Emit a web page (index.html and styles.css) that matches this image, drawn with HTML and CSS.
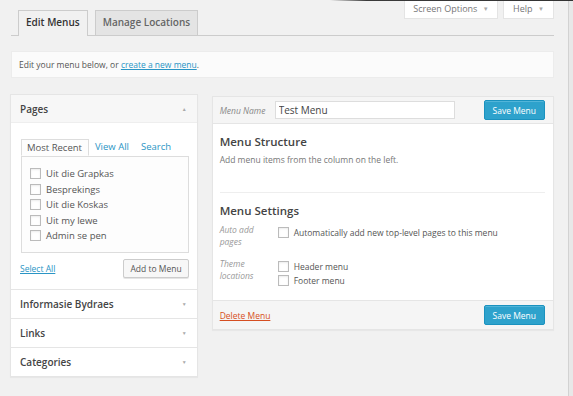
FILE: index.html
```html
<!DOCTYPE html>
<html lang="en">
<head>
  <meta charset="UTF-8">
  <title>Menus</title>
  <link rel="stylesheet" href="styles.css">
</head>
<body>
  <div class="page">
    <div class="wrap">
      <div class="screen-meta-links">
        <a href="#" class="meta-button options">Screen Options <span class="caret">▼</span></a>
        <a href="#" class="meta-button help">Help <span class="caret">▼</span></a>
      </div>

      <div class="nav-tabs">
        <a href="#" class="nav-tab active">Edit Menus</a>
        <a href="#" class="nav-tab">Manage Locations</a>
      </div>

      <div class="notice">
        Edit your menu below, or <a href="#">create a new menu</a>.
      </div>

      <div class="columns">
        <!-- Left: items to add -->
        <div class="side">
          <div class="side-section">
            <div class="side-title">Pages <span class="arrow">▲</span></div>
            <div class="side-body">
              <ul class="tabs">
                <li class="tab current">Most Recent</li>
                <li class="tab">View All</li>
                <li class="tab">Search</li>
              </ul>
              <div class="tab-panel">
                <label class="check"><span class="box"></span>Uit die Grapkas</label>
                <label class="check"><span class="box"></span>Besprekings</label>
                <label class="check"><span class="box"></span>Uit die Koskas</label>
                <label class="check"><span class="box"></span>Uit my lewe</label>
                <label class="check"><span class="box"></span>Admin se pen</label>
              </div>
              <div class="side-actions">
                <a href="#" class="select-all">Select All</a>
                <button class="button">Add to Menu</button>
              </div>
            </div>
          </div>
          <div class="side-section closed">
            <div class="side-title">Informasie Bydraes <span class="arrow">▼</span></div>
          </div>
          <div class="side-section closed">
            <div class="side-title">Links <span class="arrow">▼</span></div>
          </div>
          <div class="side-section closed">
            <div class="side-title">Categories <span class="arrow">▼</span></div>
          </div>
        </div>

        <!-- Right: menu edit -->
        <div class="menu-edit">
          <div class="menu-header">
            <span class="field-label">Menu Name</span>
            <input class="menu-name" type="text" value="Test Menu">
            <button class="button-primary">Save Menu</button>
          </div>
          <div class="menu-body">
            <h3>Menu Structure</h3>
            <p class="hint">Add menu items from the column on the left.</p>
            <div class="divider"></div>
            <h3>Menu Settings</h3>
            <div class="setting">
              <span class="setting-label">Auto add pages</span>
              <div class="setting-input">
                <label class="check"><span class="box"></span>Automatically add new top-level pages to this menu</label>
              </div>
            </div>
            <div class="setting">
              <span class="setting-label">Theme locations</span>
              <div class="setting-input">
                <label class="check"><span class="box"></span>Header menu</label>
                <label class="check"><span class="box"></span>Footer menu</label>
              </div>
            </div>
          </div>
          <div class="menu-footer">
            <a href="#" class="delete">Delete Menu</a>
            <button class="button-primary">Save Menu</button>
          </div>
        </div>
      </div>
    </div>
    <div class="scrollbar"></div>
  </div>
</body>
</html>
```

FILE: styles.css
```css
* {
  margin: 0;
  padding: 0;
  box-sizing: border-box;
}

body {
  background-color: #f1f1f1;
  color: #444;
  font-family: 'Open Sans', 'Noto Sans', sans-serif;
  font-size: 9px;
}

a {
  color: #2a95c5;
}

.page {
  position: relative;
  display: flex;
  height: 396px;
  overflow: hidden;
}

/* edge of the admin bar above the screenshot */
.page::before {
  content: '';
  position: absolute;
  top: 0;
  left: 330px;
  right: 0;
  height: 1px;
  background: linear-gradient(to right, rgba(60, 60, 60, 0), #3a3a3a 15%, #333);
}

.wrap {
  width: 568px;
  padding: 0 14px 0 11px;
}

.scrollbar {
  flex: 1;
  background-color: #e8e8e8;
  border-left: 1px solid #d2d2d2;
}

/* Screen options / help */
.screen-meta-links {
  display: flex;
  justify-content: flex-end;
  gap: 5px;
  height: 19px;
}

.meta-button {
  display: block;
  height: 19px;
  line-height: 18px;
  text-align: center;
  background-color: #fff;
  border: 1px solid #e4e4e4;
  border-top: none;
  color: #777;
  font-size: 9px;
  text-decoration: none;
}

.meta-button.options {
  width: 94px;
}

.meta-button.help {
  width: 51px;
}

.meta-button .caret {
  font-size: 6px;
  color: #aaa;
  margin-left: 3px;
  vertical-align: 1px;
}

/* Tabs */
.nav-tabs {
  display: flex;
  gap: 7px;
  margin-top: -9px;
  padding-left: 7px;
  border-bottom: 1px solid #ccc;
}

.nav-tab {
  display: block;
  height: 25px;
  line-height: 23px;
  padding: 0 7px;
  border: 1px solid #ccc;
  border-bottom: none;
  background-color: #e4e4e4;
  color: #666;
  font-size: 10px;
  font-weight: 600;
  text-decoration: none;
  margin-bottom: -1px;
}

.nav-tab.active {
  background-color: #f1f1f1;
  color: #333;
  height: 26px;
}

/* Notice */
.notice {
  margin-top: 15px;
  height: 27px;
  line-height: 26px;
  padding: 0 7px;
  background-color: #fbfbfb;
  border: 1px solid #ececec;
  color: #555;
  font-size: 8.5px;
}

/* Columns */
.columns {
  display: flex;
  gap: 14px;
  align-items: flex-start;
  margin-top: 16px;
  margin-left: -1px;
}

.side {
  width: 188px;
  background-color: #fff;
  border: 1px solid #e5e5e5;
  box-shadow: 0 1px 1px rgba(0, 0, 0, 0.04);
}

.side-section + .side-section {
  border-top: 1px solid #e5e5e5;
}

.side-title {
  display: flex;
  justify-content: space-between;
  align-items: center;
  height: 28px;
  padding: 0 10px 0 9px;
  font-size: 10px;
  font-weight: 600;
  color: #444;
}

.side-section:first-child .side-title {
  background-color: #f7f7f7;
  border-bottom: 1px solid #eee;
}

.arrow {
  font-size: 5px;
  color: #aaa;
  font-weight: normal;
}

.side-body {
  padding: 16px 8px 11px 10px;
}

.tabs {
  display: flex;
  list-style: none;
}

.tab {
  height: 17px;
  line-height: 16px;
  padding: 0 6px 0 5px;
  color: #2a95c5;
  font-size: 9.5px;
}

.tab.current {
  color: #555;
  border: 1px solid #ddd;
  border-bottom: 1px solid #fdfdfd;
  background-color: #fdfdfd;
  margin-bottom: -1px;
  position: relative;
  z-index: 1;
}

.tab + .tab {
  padding-left: 6px;
}

.tab-panel {
  border: 1px solid #ddd;
  background-color: #fdfdfd;
  height: 97px;
  padding: 9px 8px 8px;
  display: flex;
  flex-direction: column;
}

.check {
  display: flex;
  align-items: center;
  height: 15.5px;
  color: #555;
  font-size: 9.5px;
}

.box {
  width: 11px;
  height: 11px;
  border: 1px solid #bbb;
  background-color: #fff;
  box-shadow: inset 0 1px 2px rgba(0, 0, 0, 0.08);
  margin-right: 5px;
  flex-shrink: 0;
}

.side-actions {
  display: flex;
  justify-content: space-between;
  align-items: center;
  margin-top: 6px;
}

.select-all {
  font-size: 8.5px;
  margin-left: -1px;
}

.button {
  height: 19px;
  padding: 0 6px;
  background-color: #f7f7f7;
  border: 1px solid #ccc;
  border-radius: 2px;
  box-shadow: 0 1px 0 #e5e5e5;
  color: #555;
  font-family: inherit;
  font-size: 8.5px;
}

/* Menu editor */
.menu-edit {
  width: 343px;
  margin-top: 2px;
  background-color: #fff;
  border: 1px solid #e5e5e5;
  box-shadow: 0 1px 1px rgba(0, 0, 0, 0.04);
}

.menu-header {
  display: flex;
  align-items: center;
  height: 27px;
  padding: 0 8px 0 7px;
  background-color: #f5f5f5;
  border-bottom: 1px solid #e5e5e5;
}

.field-label {
  width: 55px;
  font-style: italic;
  color: #888;
  font-size: 8.5px;
}

.menu-name {
  width: 180px;
  height: 18px;
  padding: 0 3px;
  border: 1px solid #ddd;
  background-color: #fff;
  color: #444;
  font-family: inherit;
  font-size: 10px;
}

.button-primary {
  margin-left: auto;
  height: 20px;
  padding: 0 8px;
  background-color: #2ea2cc;
  border: 1px solid #1b92bf;
  border-radius: 2px;
  box-shadow: inset 0 1px 0 rgba(120, 200, 230, 0.5);
  color: #fff;
  font-family: inherit;
  font-size: 8.5px;
}

.menu-body {
  padding: 10px 8px 8px 7px;
  height: 176px;
}

h3 {
  font-size: 11.5px;
  font-weight: 600;
  color: #444;
}

.hint {
  margin-top: 5px;
  color: #777;
  font-size: 8.5px;
}

.divider {
  margin: 27px 0 10px;
  border-top: 1px solid #eee;
}

.setting {
  display: flex;
  margin-top: 6px;
}

.setting + .setting {
  margin-top: 10px;
}

.setting-label {
  width: 58px;
  padding-right: 14px;
  font-style: italic;
  color: #999;
  font-size: 8.5px;
  line-height: 12px;
}

.setting-input {
  padding-top: 1px;
}

.setting-input .check {
  height: 14px;
  font-size: 8.5px;
}

.menu-footer {
  display: flex;
  align-items: center;
  height: 29px;
  padding: 0 8px 0 7px;
  background-color: #f5f5f5;
  border-top: 1px solid #e5e5e5;
}

.delete {
  color: #d54e21;
  font-size: 8.5px;
}
```
